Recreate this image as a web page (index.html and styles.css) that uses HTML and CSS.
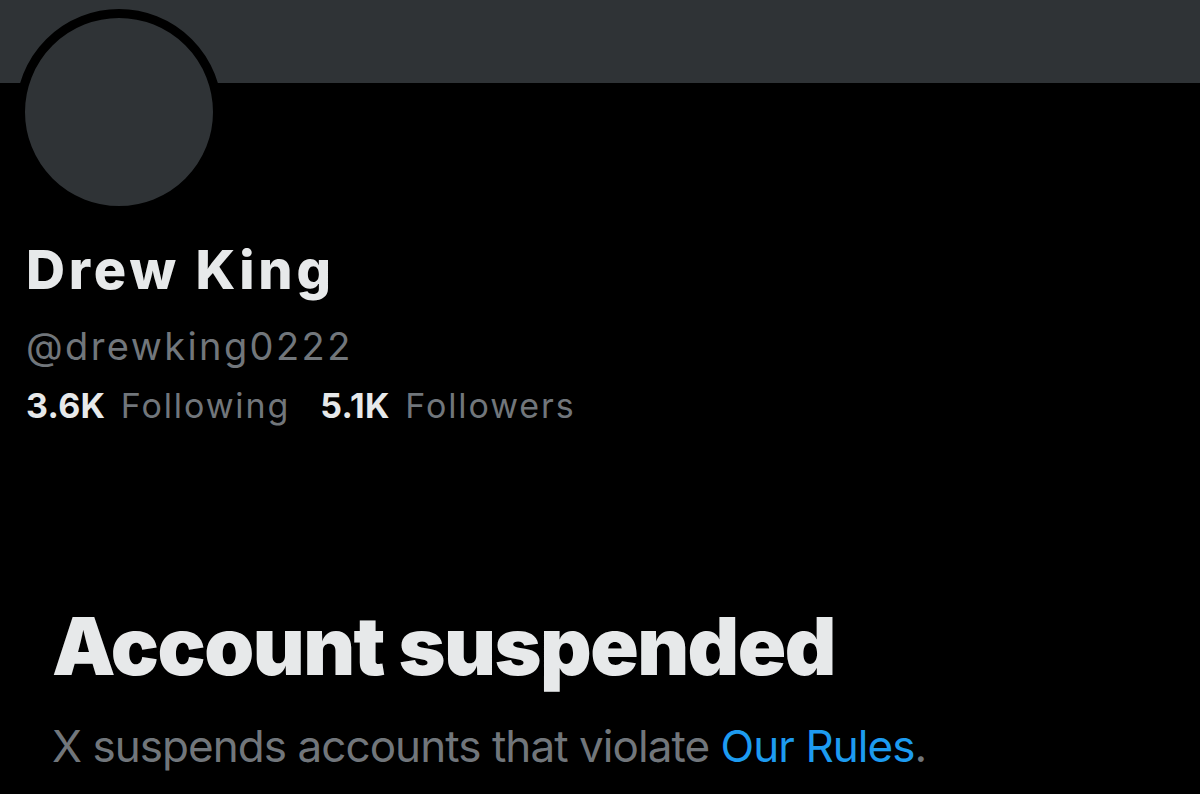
FILE: index.html
```html
<!DOCTYPE html>
<html lang="en">
<head>
<meta charset="utf-8">
<title>Drew King</title>
<link rel="stylesheet" href="styles.css">
</head>
<body>
<div class="banner"></div>
<section class="profile">
  <div class="avatar"></div>
  <h1 class="name">Drew King</h1>
  <div class="handle">@drewking0222</div>
  <div class="stats">
    <span class="stat"><b>3.6K</b> Following</span>
    <span class="stat"><b>5.1K</b> Followers</span>
  </div>
</section>
<section class="suspended">
  <h2 class="title">Account suspended</h2>
  <p class="note">X suspends accounts that violate <a class="link" href="#">Our Rules</a>.</p>
</section>
</body>
</html>
```
FILE: styles.css
```css
html, body {
  margin: 0;
  padding: 0;
  background: #000;
  height: 100%;
  overflow: hidden;
}
body {
  font-family: Inter, "Liberation Sans", sans-serif;
  color: #e7e9ea;
}
.banner {
  height: 83px;
  background: #2f3336;
}
.profile {
  padding-left: 26px;
  display: flex;
  flex-direction: column;
  align-items: flex-start;
}
.avatar {
  width: 188px;
  height: 188px;
  border: 9px solid #000;
  border-radius: 50%;
  background: #2f3336;
  margin-top: -74px;
  margin-left: -10px;
}
.name {
  margin: 28px 0 0 0;
  font-size: 54px;
  line-height: 1;
  font-weight: 800;
  letter-spacing: 3.8px;
  color: #e7e9ea;
}
.handle {
  margin-top: 30px;
  font-size: 38px;
  line-height: 1;
  letter-spacing: 2.4px;
  color: #71767b;
}
.stats {
  margin-top: 24px;
  display: flex;
  gap: 30px;
  font-size: 34px;
  line-height: 1;
  color: #71767b;
}
.stat {
  letter-spacing: 1.9px;
}
.stat b {
  color: #e7e9ea;
  font-weight: 700;
  letter-spacing: 0.3px;
  margin-right: 4px;
}
.suspended {
  padding-left: 52px;
  margin-top: 183px;
}
.title {
  margin: 0;
  font-size: 80px;
  line-height: 1;
  font-weight: 900;
  letter-spacing: -1.5px;
  color: #e7e9ea;
}
.note {
  margin: 38px 0 0 0;
  font-size: 44px;
  line-height: 1;
  letter-spacing: -0.95px;
  color: #71767b;
}
.link {
  color: #1d9bf0;
  text-decoration: none;
}
```
